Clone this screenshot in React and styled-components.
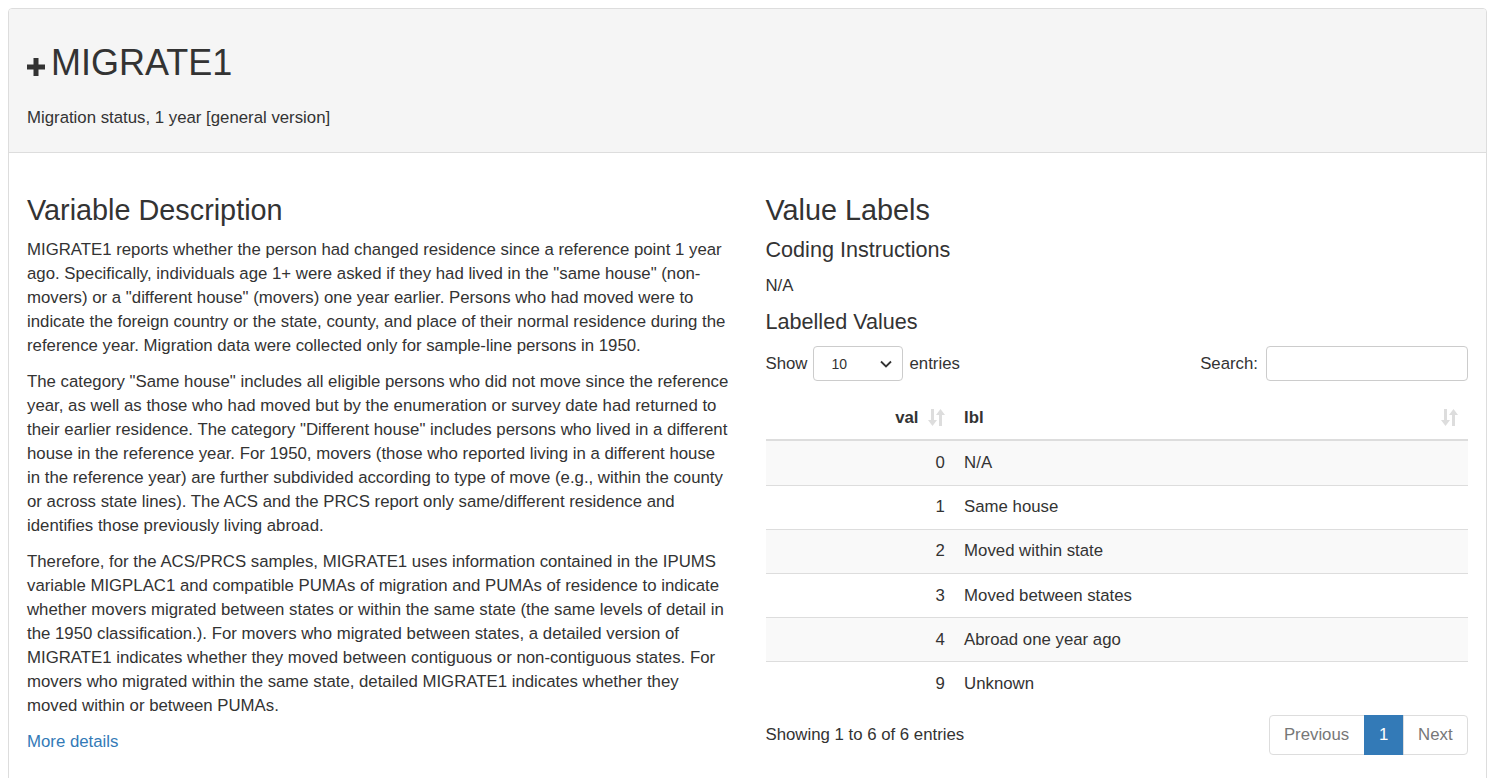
import React from 'react';
import styled, { createGlobalStyle } from 'styled-components';

const GlobalStyle = createGlobalStyle`
    body {
        margin: 8px;
        font-family: "Liberation Sans", Arial, Helvetica, sans-serif;
        font-size: 16.8px;
        line-height: 24px;
        color: #333;
        background: #fff;
    }
    * { box-sizing: border-box; }
`;

const Panel = styled.div`
    border: 1px solid #ddd;
    border-radius: 4px;
    background: #fff;
`;

const PanelHeading = styled.div`
    background: #f5f5f5;
    border-bottom: 1px solid #ddd;
    border-radius: 3px 3px 0 0;
    padding: 12px 18px;
`;

const Title = styled.h1`
    margin: 22px 0 23px;
    font-size: 36px;
    font-weight: 400;
    line-height: 39.6px;
    display: flex;
    align-items: baseline;
    gap: 6px;
`;

const PlusIcon = styled.svg`
    width: 18px;
    height: 18px;
    flex: none;
    transform: translateY(1px);
`;

const Subtitle = styled.p`
    margin: 0 0 10px;
`;

const PanelBody = styled.div`
    padding: 18px 18px 40px;
`;

const Columns = styled.div`
    display: grid;
    grid-template-columns: 1fr 1fr;
    column-gap: 36px;
`;

const Column = styled.div`
    min-width: 0;
`;

const H2 = styled.h2`
    margin: 24px 0 12px;
    font-size: 28.8px;
    font-weight: 400;
    line-height: 31.7px;
`;

const H3 = styled.h3`
    margin: 0 0 12px;
    font-size: 21.6px;
    font-weight: 400;
    line-height: 24px;
`;

const P = styled.p`
    margin: 0 0 12px;
`;

const Link = styled.a`
    color: #337ab7;
    text-decoration: none;
    cursor: pointer;
`;

const Controls = styled.div`
    display: flex;
    justify-content: space-between;
    align-items: center;
    margin-top: 12px;
`;

const ControlLabel = styled.label`
    display: flex;
    align-items: center;
    gap: 6px;
`;

const SelectBox = styled.div`
    width: 90px;
    height: 35px;
    border: 1px solid #ccc;
    border-radius: 4px;
    display: flex;
    align-items: center;
    justify-content: space-between;
    padding: 0 10px 0 17px;
    font-size: 14px;
    color: #333;
    background: #fff;
`;

const SearchInput = styled.input`
    width: 202px;
    height: 35px;
    border: 1px solid #ccc;
    border-radius: 4px;
    margin-left: 2px;
    font: inherit;
    padding: 0 10px;
`;

const Table = styled.table`
    width: 100%;
    border-collapse: collapse;
    margin-top: 15px;
`;

const Th = styled.th`
    text-align: ${p => p.$align || 'left'};
    font-weight: 700;
    padding: 9.6px ${p => (p.$align === 'right' ? '36px' : '9.6px')} 9.6px 9.6px;
    border-bottom: 2px solid #ddd;
    position: relative;
    width: ${p => p.$width || 'auto'};
`;

const SortIcon = styled.svg`
    position: absolute;
    right: 10px;
    top: 12px;
    width: 17px;
    height: 19px;
`;

const Tr = styled.tr`
    background: ${p => (p.$striped ? '#f9f9f9' : '#fff')};
`;

const Td = styled.td`
    text-align: ${p => p.$align || 'left'};
    padding: 9.6px;
    border-top: 1px solid #ddd;
    line-height: 24px;
`;

const Footer = styled.div`
    display: flex;
    justify-content: space-between;
    align-items: center;
    margin-top: 9px;
`;

const Pagination = styled.div`
    display: flex;
`;

const PageButton = styled.span`
    padding: 7.2px 14.4px;
    line-height: 24px;
    border: 1px solid ${p => (p.$active ? '#337ab7' : '#ddd')};
    background: ${p => (p.$active ? '#337ab7' : '#fff')};
    color: ${p => (p.$active ? '#fff' : '#777')};
    margin-left: -1px;
    &:first-child {
        border-radius: 4px 0 0 4px;
        margin-left: 0;
    }
    &:last-child {
        border-radius: 0 4px 4px 0;
    }
`;

const Sort = () => (
    <SortIcon viewBox="0 0 17 19">
        <g fill="#ddd">
            <rect x="3" y="1" width="3" height="12" />
            <polygon points="0,12 9,12 4.5,18" />
            <rect x="11" y="6" width="3" height="12" />
            <polygon points="8,7 17,7 12.5,1" />
        </g>
    </SortIcon>
);

const rows = [
    ['0', 'N/A'],
    ['1', 'Same house'],
    ['2', 'Moved within state'],
    ['3', 'Moved between states'],
    ['4', 'Abroad one year ago'],
    ['9', 'Unknown'],
];

const App = () => {
    return (
        <>
            <GlobalStyle />
            <Panel>
                <PanelHeading>
                    <Title>
                        <PlusIcon viewBox="0 0 18 18">
                            <rect x="6.5" y="0" width="5" height="18" fill="#333" />
                            <rect x="0" y="6.5" width="18" height="5" fill="#333" />
                        </PlusIcon>
                        MIGRATE1
                    </Title>
                    <Subtitle>Migration status, 1 year [general version]</Subtitle>
                </PanelHeading>
                <PanelBody>
                    <Columns>
                        <Column>
                            <H2>Variable Description</H2>
                            <P>
                                MIGRATE1 reports whether the person had changed residence since a reference point 1 year ago. Specifically, individuals age 1+ were asked if they had lived in the "same house" (non-movers) or a "different house" (movers) one year earlier. Persons who had moved were to indicate the foreign country or the state, county, and place of their normal residence during the reference year. Migration data were collected only for sample-line persons in 1950.
                            </P>
                            <P>
                                The category "Same house" includes all eligible persons who did not move since the reference year, as well as those who had moved but by the enumeration or survey date had returned to their earlier residence. The category "Different house" includes persons who lived in a different house in the reference year. For 1950, movers (those who reported living in a different house in the reference year) are further subdivided according to type of move (e.g., within the county or across state lines). The ACS and the PRCS report only same/different residence and identifies those previously living abroad.
                            </P>
                            <P>
                                Therefore, for the ACS/PRCS samples, MIGRATE1 uses information contained in the IPUMS variable MIGPLAC1 and compatible PUMAs of migration and PUMAs of residence to indicate whether movers migrated between states or within the same state (the same levels of detail in the 1950 classification.). For movers who migrated between states, a detailed version of MIGRATE1 indicates whether they moved between contiguous or non-contiguous states. For movers who migrated within the same state, detailed MIGRATE1 indicates whether they moved within or between PUMAs.
                            </P>
                            <Link>More details</Link>
                        </Column>
                        <Column>
                            <H2>Value Labels</H2>
                            <H3>Coding Instructions</H3>
                            <P>N/A</P>
                            <H3>Labelled Values</H3>
                            <Controls>
                                <ControlLabel>
                                    Show
                                    <SelectBox>
                                        <span>10</span>
                                        <svg width="12" height="8" viewBox="0 0 12 8">
                                            <path d="M1 1.5 L6 6.5 L11 1.5" fill="none" stroke="#333" strokeWidth="1.8" />
                                        </svg>
                                    </SelectBox>
                                    entries
                                </ControlLabel>
                                <ControlLabel>
                                    Search:
                                    <SearchInput type="search" />
                                </ControlLabel>
                            </Controls>
                            <Table>
                                <thead>
                                    <tr>
                                        <Th $align="right" $width="189px">val<Sort /></Th>
                                        <Th>lbl<Sort /></Th>
                                    </tr>
                                </thead>
                                <tbody>
                                    {rows.map(([v, l], i) => (
                                        <Tr key={v} $striped={i % 2 === 0}>
                                            <Td $align="right">{v}</Td>
                                            <Td>{l}</Td>
                                        </Tr>
                                    ))}
                                </tbody>
                            </Table>
                            <Footer>
                                <span>Showing 1 to 6 of 6 entries</span>
                                <Pagination>
                                    <PageButton>Previous</PageButton>
                                    <PageButton $active>1</PageButton>
                                    <PageButton>Next</PageButton>
                                </Pagination>
                            </Footer>
                        </Column>
                    </Columns>
                </PanelBody>
            </Panel>
        </>
    );
};

export default App;
